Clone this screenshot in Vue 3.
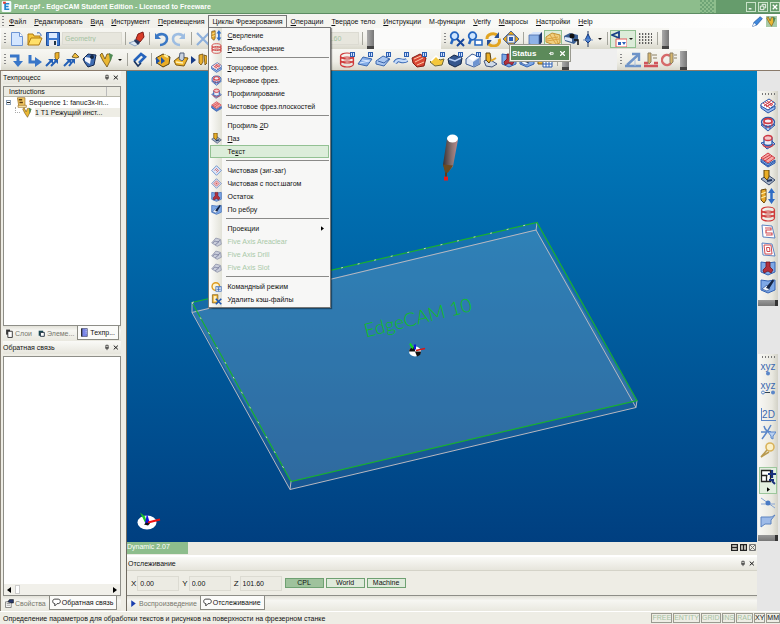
<script setup>
import { ref } from 'vue'

const tag = '<rect x="11" y="0" width="5" height="5" fill="#2c5fb0"/><path d="M12.500 1v3M14.500 1v3" stroke="#cfe0ff"/>'
const drillBit = '<path d="M1 2l5-1v11l-2 3-3-3z" fill="#e8a82a" stroke="#6b4a10"/><path d="M1 6l5-2M1 10l5-2" stroke="#fff2b0"/>'
const rings = '<g fill="none" stroke="#cf3a3a" stroke-width="1.200"><ellipse cx="8" cy="4" rx="6.500" ry="3"/><ellipse cx="8" cy="8" rx="6.500" ry="3"/><ellipse cx="8" cy="12" rx="6.500" ry="3"/><path d="M1.500 4v8M14.500 4v8"/></g>'
const bluePanel = '<path d="M1 2l7 1 7-1v10l-7 3-7-3z" fill="#7ea8e6" stroke="#3464b4"/>'
const magnifier = '<circle cx="5.500" cy="5" r="3.800" fill="#cfe6ff" stroke="#2466c0" stroke-width="1.800"/><path d="M4 8l-2 5" stroke="#2466c0" stroke-width="2.500"/>'

const icons = {
  logo: '<rect x="1" y="0" width="14" height="16" rx="2" fill="#f3fbff"/><path d="M12 4H6v8h6M6 8h5" fill="none" stroke="#1f86d0" stroke-width="2.500"/><path d="M3 1h4v3H3z" fill="#e03c30"/>',
  fresh: '<path d="M2.500 1.500h8l3 4v9h-11z" fill="#d4e6ff" stroke="#6c94d4"/><path d="M10.500 1.500v4h3" fill="#fff" stroke="#6c94d4"/>',
  open: '<path d="M1 14V3h5l1 2h6v3" fill="#f6c63c" stroke="#b07a10"/><path d="M1 14l3-7h11l-3 7z" fill="#ffe06a" stroke="#b07a10"/><path d="M10 2c3-1 4 1 4 3" fill="none" stroke="#2a5cb0"/>',
  save: '<path d="M1.500 1.500h13v13h-13z" fill="#3f7ad0" stroke="#1d4a98"/><path d="M4 2h8v5H4z" fill="#dceaff"/><path d="M4 9h8v6H4z" fill="#e9e9ee"/><path d="M9 10h2v4H9z" fill="#234"/>',
  brush: '<path d="M0 12l8-3 3 3-5 3z" fill="#dfeaf6" stroke="#8aa2c0"/><path d="M9 3l5-2 1 5-4 5-4-3z" fill="#d83c28" stroke="#801c18"/><path d="M6 8l5 3-2 3-4-4z" fill="#26365e"/>',
  undo: '<path d="M2 2v6h6z" fill="#3b78c4"/><path d="M3 6c4-5 11-3 11 2 0 4-4 6-7 6" fill="none" stroke="#3b78c4" stroke-width="2.600"/>',
  redo: '<path d="M14 2v6H8z" fill="#9dbde2"/><path d="M13 6C9 1 2 3 2 8c0 4 4 6 7 6" fill="none" stroke="#9dbde2" stroke-width="2.600"/>',
  cross: '<path d="M2 2l12 12M14 2L2 14" stroke="#8eb0dc" stroke-width="2.200"/>',
  zoomx: magnifier + '<path d="M8 8l7 7M15 8l-7 7" stroke="#17479c" stroke-width="2"/>',
  zoombox: magnifier + '<path d="M8 9h7v5H8z" fill="#fff" stroke="#2466c0" stroke-width="1.500"/>',
  orbit: '<path d="M2 8a6 5 0 0 1 11-3M14 8a6 5 0 0 1-11 4" fill="none" stroke="#e2a420" stroke-width="3"/><path d="M14 1v6H9zM2 15V9h5z" fill="#2a4f94"/><circle cx="8" cy="8" r="2" fill="#eef5ff"/>',
  pan: '<path d="M8 0l4 4H4zM8 16l4-4H4zM0 8l4-4v8zM16 8l-4-4v8z" fill="#e5a51c" stroke="#2f4f92" stroke-width=".8"/><path d="M6 6h4v4H6z" fill="#2a5ab4"/>',
  cube: '<path d="M2 4l4-3h9l-3 3z" fill="#d7e5fb"/><path d="M2 4h10v11L2 13z" fill="#8eb2e6"/><path d="M12 4l3-3v10l-3 4z" fill="#1e3768"/><path d="M2 4h10v11L2 13z" fill="none" stroke="#4b6ca8" stroke-width=".8"/>',
  wire: '<path d="M1 6l6-4 8 2v8l-6 2-8-3z" fill="#f0cf80" stroke="#c39030"/><path d="M2 8l11-2M2 10l12-2M5 4l6 9M9 3l4 9" stroke="#d9a240" fill="none"/>',
  camera: '<path d="M1 5l6-3 8 2v5l-4 4-9-3z" fill="#3b5f92"/><path d="M2 6l7 1v4l-7-2z" fill="#dce9fa"/><circle cx="9" cy="5" r="2.500" fill="#111"/><path d="M11 9h4v5" fill="none" stroke="#111" stroke-width="1.500"/>',
  needle: '<path d="M8 0v16" stroke="#23395f"/><path d="M8 3l3 6-3 3-3-3z" fill="#3f7ad0" stroke="#1d3f80"/><path d="M3 9h10" stroke="#7996c4"/>',
  select: '<path d="M1 4l7-3v6z" fill="none" stroke="#173f86" stroke-width="1.800"/><path d="M5 8h11v8H5z" fill="#fff" stroke="#df5a5a"/><path d="M7 11h3v3H7zM11 11h4l-2 3z" fill="#2a62bc"/>',
  dots: '<path d="M2 3h13M2 6h13M2 9h13M2 12h13" stroke="#333" stroke-width="1.300" stroke-dasharray="1.300 1.700"/>',
  turn: '<path d="M1 4h8v7" fill="none" stroke="#3876c8" stroke-width="3"/><path d="M4 9h10l-5 6z" fill="#3876c8"/>',
  step: '<path d="M3 3v7h6" fill="none" stroke="#3876c8" stroke-width="3"/><path d="M8 5l7 5-7 5z" fill="#3876c8"/>',
  moveA: '<path d="M1 14l5-5M6 14l5-5" stroke="#2460b6" stroke-width="2"/><path d="M3 7h5v5zM8 7h5v5z" fill="#2460b6"/><path d="M10 1l4-1v6l-2 2-2-2z" fill="#eab02c" stroke="#6b4a10" stroke-width=".7"/>',
  moveB: '<path d="M1 14l5-5M6 14l4-5" stroke="#2460b6" stroke-width="2"/><path d="M3 7h5v5zM7 7h5v5z" fill="#2460b6"/><path d="M9 5l3-4 4 4-3 1z" fill="#f3bf3c" stroke="#53421a" stroke-width=".8"/>',
  mill: '<path d="M2 7l5-5 8 1-2 10-6 2-3-4z" fill="#3f6db2" stroke="#14284e"/><path d="M4 5l6 1-1 6-5-3z" fill="#f2f6ff"/><circle cx="11" cy="5" r="2" fill="#132440"/>',
  tool: '<path d="M3 1l3 6 2-5h3l1 5-4 8-4-6-3-6z" fill="#eab733" stroke="#6b4c12" stroke-width=".8"/><path d="M10 1l4 2-3 7" fill="#4f8a54"/>',
  clip: '<path d="M3 9l7-7 4 3-6 6" fill="none" stroke="#2664bc" stroke-width="2.600"/><path d="M3 9l4 5 3-3" fill="none" stroke="#18335f" stroke-width="1.600"/>',
  holder: '<path d="M1 6l7-4 7 3-1 7-6 3-6-4z" fill="#eaae26" stroke="#54400f"/><path d="M1 5v7l4-3zM6 5v7l4-3z" fill="#1e53a8"/><path d="M9 3l4 2" stroke="#fff0a0" stroke-width="2"/>',
  plate: '<path d="M1 9l5-4 9 1-4 8-8-1z" fill="#efb52c" stroke="#7a5814"/><path d="M7 1h4v6l-2 2-3-2z" fill="#c9d2de" stroke="#52617a"/><path d="M3 10l7 1" stroke="#fff3b8" stroke-width="1.500"/>',
  playDrill: '<path d="M0 4l5 4-5 4z" fill="#173c86"/><path d="M8 3l4-1v8l-2 3-2-2zM13 3l3 1v7l-2 2z" fill="#eab02c" stroke="#6b4a10" stroke-width=".8"/>',
  spiral: rings,
  spiralTag: rings + tag,
  sheet: '<path d="M1 12l5-7 9 2-5 7z" fill="#86aee8" stroke="#3d68ae"/><path d="M3 11l9-2M5 8l8 1" stroke="#d9e8ff"/>' + tag,
  sheetB: '<path d="M1 9l7-5 7 3-6 7-8-2z" fill="#a9c6f0" stroke="#3d68ae"/><path d="M3 9l6 2 5-4" fill="none" stroke="#3a64aa"/>' + tag,
  pipe: '<path d="M2 11c4-7 6 1 12-3" fill="none" stroke="#3868b4" stroke-width="4.500"/><path d="M2 11c4-7 6 1 12-3" fill="none" stroke="#c4dbfa" stroke-width="2.500"/>' + tag,
  redShape: '<path d="M1 6l8-4 6 4-2 8-7 1-4-4z" fill="#d84834" stroke="#821d16"/><path d="M3 7l7-3M4 10l8-4M6 13l7-3" stroke="#ffc7aa"/>' + tag,
  yellowShape: '<path d="M1 10l6-6 4 4 4-1-2 6-7 1z" fill="#f4c73c" stroke="#6f6a3a"/><path d="M2 9l5-5 3 3" fill="none" stroke="#fff" stroke-width="1.500"/>' + tag,
  sphere: '<path d="M1 7l6-4 8 3-1 6-6 3-6-3z" fill="#35578e" stroke="#142748"/><path d="M2 7l6 2 6-3" stroke="#b9d2f8" fill="none" stroke-width="1.500"/>' + tag,
  block: '<path d="M1 7l6-5 8 3v7l-6 3-8-3z" fill="#dfe8f4" stroke="#3e5f98"/><path d="M3 6l5-3 5 2-5 4z" fill="#fff"/><path d="M8 10l6-4v6l-6 3z" fill="#6d94d0"/>' + tag,
  handTool: '<path d="M1 9l5-2 8 5-5 3-6-1z" fill="#cfdae8" stroke="#44567c"/><path d="M3 1h4l1 7-2 3-3-3z" fill="#eaae26" stroke="#5d420f"/><path d="M8 9l5-3" stroke="#e9ad2a" stroke-width="2"/>',
  rest: bluePanel + '<path d="M6 2h4v5l3 3-2 3-3-2-4 2-1-3 3-3z" fill="#b3303c" stroke="#6f1420" stroke-width=".8"/>',
  rib: bluePanel + '<path d="M2 11l5-4 3 4-3 2z" fill="#f3f8ff" stroke="#294f94" stroke-width=".7"/><path d="M13 1l-5 6-2 3 3 1 5-8z" fill="#152544"/>',
  face: '<path d="M1 7l7 5 7-4v3l-7 4-7-5z" fill="#9bbcf0" stroke="#2b58aa"/><path d="M1 6l8-5 6 4v2l-7 5-7-4z" fill="#fff" stroke="#2b58aa"/><path d="M3 5l7 5M5 4l7 4M7 3l6 4M4 8l8-6M6 9l8-5" stroke="#cf3a44"/>',
  rough: '<path d="M1 9l7 6 7-6-7-4z" fill="#a9c5f1" stroke="#2b58aa"/><ellipse cx="8" cy="6" rx="6.500" ry="4.500" fill="#f5eef4" stroke="#2b58aa" stroke-width="1.400"/><ellipse cx="8" cy="5" rx="4" ry="2.400" fill="none" stroke="#cf3a44" stroke-width="1.600"/><path d="M4 5v4c1 3 7 3 8 0V5" fill="none" stroke="#cf3a44"/><path d="M6 9v4M10 9v4" stroke="#2b58aa"/>',
  profile: '<path d="M1 9l6 6 8-5-4-4z" fill="#a9c5f1" stroke="#2b58aa"/><path d="M3 10c0 4 10 4 10 0" fill="none" stroke="#cf3a44" stroke-width="1.300"/><path d="M4 4v6c1 2 7 2 8 0V4z" fill="#e6eaf6" stroke="#2b58aa" stroke-width="1.300"/><ellipse cx="8" cy="4" rx="4" ry="2.500" fill="#f2c6c8" stroke="#cf3a44" stroke-width="1.300"/>',
  flat: '<path d="M1 7l7 5 7-4v3l-7 4-7-5z" fill="#86abe6" stroke="#2b58aa"/><path d="M1 6l7-5 7 5-7 5z" fill="#f6a8a4" stroke="#cf3a44"/><path d="M3 7l7-4M5 9l7-5" stroke="#cf3a44"/><path d="M1 9l7 5 7-5" fill="none" stroke="#2b58aa"/>',
  slot: '<path d="M1 9l7-4 7 5-6 5z" fill="#a8b6ca" stroke="#3b4b6c"/><path d="M4 0h5v7l-2 3-3-3z" fill="#eaae26" stroke="#5d420f"/><path d="M7 11l5-1" stroke="#24375e" stroke-width="2"/>',
  drill: drillBit + '<path d="M11.500 3v10" stroke="#2f6cc4" stroke-width="2.500"/><path d="M8 5l3.500-5L15 5zM8 11l3.500 5 3.500-5z" fill="#2f6cc4"/>',
  diamond: '<path d="M8 1l7 7-7 7-7-7z" fill="#dce8fb" stroke="#4472bc"/><path d="M5 8l3-3 3 3-3 3M7 8h2" fill="none" stroke="#cf5a60" stroke-width="1.200"/>',
  diamondRed: '<path d="M8 1l7 7-7 7-7-7z" fill="#dde4f4" stroke="#5a78b4"/><path d="M8 4l4 4-4 4-4-4z" fill="#f1c3c3" stroke="#cf5a60"/><path d="M8 6.500l1.500 1.500L8 9.500 6.500 8z" fill="#cf5a60"/>',
  zigzag: '<path d="M2 1l10 1 3 12-12-1z" fill="#fff" stroke="#5d82c0"/><path d="M5 4h6v2H6v3h6v2H6" fill="none" stroke="#d04a50" stroke-width="1.200"/>',
  spiralSq: '<path d="M2 1l10 1 3 12-12-1z" fill="#fff" stroke="#5d82c0"/><path d="M4 3h7l1 9H5zM6.500 5.500h3l.5 4h-3z" fill="none" stroke="#d04a50"/>',
  gray: '<path d="M1 10l6-7 7 2 1 7-6 3z" fill="#c9cdda" stroke="#8288a0"/><path d="M3 10c3-6 6 2 10-4M6 13l6-5" fill="none" stroke="#747a9a" stroke-width="1.200"/>',
  cmd: '<circle cx="7" cy="8" r="5.500" fill="#fff4cf" stroke="#dc9a1e" stroke-width="2"/><path d="M7 8h8v7H7z" fill="#fff" stroke="#2a5eb4"/><path d="M8 10h6M8 12.500h6M11 9v6" stroke="#2a5eb4"/>',
  wipe: '<path d="M2 1h8v12H2z" fill="#f0b02c" stroke="#7c5c18"/><path d="M4 3h4v8H4z" fill="#fff0c0"/><path d="M7 7l8 8M15 7l-8 8" stroke="#1d56b2" stroke-width="2.300"/>',
  measure: '<path d="M2 13L13 3M0 14h16" stroke="#6f94c8" stroke-width="2.400"/><path d="M7 2h7v7" fill="none" stroke="#6f94c8" stroke-width="2.400"/><path d="M10 8v6" stroke="#a8bfdf"/>',
  cutA: '<path d="M1 14h14M1 11h4M11 11h4" stroke="#d0545a" stroke-width="2.500"/><path d="M5 1h3v9l-2 2-1-2zM9 3h5M10 6h4" fill="#d8b66a" stroke="#8c8064"/>',
  cutB: '<path d="M9 4a5 5 0 1 0 1 7" fill="none" stroke="#d66a6a" stroke-width="2.500"/><path d="M9 1h3v9l-2 2-1-2zM13 3h3M13 6h3" fill="#d8b66a" stroke="#8c8064"/>',
  gold: '<path d="M1 4h8v8H1z" fill="#f0b836" stroke="#76591a"/><path d="M6 6h9v9H6z" fill="#fff" stroke="#2a5eb4"/><path d="M6 9h9M6 12h9M9 6v9M12 6v9" stroke="#2a5eb4"/>',
  curve: '<path d="M1 8h6L11 1M7 8L2 15M4 2c1 4 4 6 7 6" fill="none" stroke="#5a86c8" stroke-width="1.500"/><path d="M8 8h8l-3 4v3l-2-1v-2z" fill="#b8d0f2" stroke="#5a86c8"/>',
  lens: '<circle cx="10" cy="5" r="4" fill="#fbf0c8" stroke="#d9b35c" stroke-width="1.600"/><path d="M7 8l-6 7 8-5" fill="none" stroke="#b8994e" stroke-width="1.500"/>',
  line: '<path d="M1 3l14 10M1 9h14" stroke="#85a3d2"/><circle cx="8" cy="8" r="2.500" fill="#4a7ac4"/>',
  flag: '<path d="M1 4h9c2 0 3-1 5-2l-4 5v4H5l-4 3z" fill="#9ebbe8" stroke="#5a82c0"/>',
  pen: '<path d="M1 15l2-6 9-8 3 3-8 9z" fill="#3f88dc" stroke="#174a94"/><path d="M1 15l2-5 3 3z" fill="#fff"/>',
  layers: '<path d="M2 1h7v9H2z" fill="#333"/><path d="M5 4h8v11H5z" fill="#fff" stroke="#222" stroke-width="1.500"/>',
  feature: '<path d="M3 3h8v9H3z" fill="#1a4a54"/><path d="M6 6h7v7H6z" fill="#fff" stroke="#123" stroke-width="1.500"/>',
  book: '<path d="M3 1h10v14H3z" fill="#7a86e8" stroke="#2d3150"/><path d="M3 1v14" stroke="#222" stroke-width="2"/><path d="M10 3h2M10 6h2M10 9h2" stroke="#fff"/>',
  props: '<path d="M1 5h10v10H1z" fill="#fff" stroke="#333"/><path d="M3 8h6M3 11h6" stroke="#555"/><path d="M5 5l3-4h7v6h-4z" fill="#28396e" stroke="#111"/>',
  bubble: '<path d="M5 2h6c5 0 5 8 0 8H9l-4 4v-4C0 10 0 2 5 2z" fill="#fff" stroke="#222" stroke-width="1.500"/>',
  play: '<path d="M4 2l8 6-8 6z" fill="#1a3fae"/>',
  seq: '<path d="M2 1h11v12H4z" fill="#f2c964" stroke="#9d6d1c"/><path d="M4 4h5M5 8h5" stroke="#5e3d10" stroke-width="2"/><path d="M3 12h12v3H3z" fill="#fff1bd" stroke="#9d6d1c"/>',
  pin: '<path d="M5 2h6v7H5zM3 9.500h10M8 10v5" fill="none" stroke="#222" stroke-width="2"/>',
  close: '<path d="M2 3l11 10M13 3L2 13" stroke="#111" stroke-width="2.600"/>',
}

const menus = [
  ['Ф', 'айл'], ['Р', 'едактировать'], ['В', 'ид'], ['И', 'нструмент'], ['П', 'еремещения'],
  ['', 'Циклы Фрезерования'], ['О', 'перации'], ['Т', 'вердое тело'], ['И', 'нструкции'],
  ['', 'М-функции'], ['V', 'erify'], ['М', 'акросы'], ['Н', 'астройки'], ['H', 'elp'],
]
const openMenu = 5

// Each entry: text before the access key, the key itself, text after it.
const cycles = [
  [{ i: 'drill', t: ['', 'С', 'верление'] }, { i: 'spiral', t: ['', 'Р', 'езьбонарезание'] }],
  [{ i: 'face', t: ['', 'Т', 'орцовое фрез.'] }, { i: 'rough', t: ['Черновое фрез.', '', ''] }, { i: 'profile', t: ['Профилирование', '', ''] }, { i: 'flat', t: ['Чистовое фрез.плоскостей', '', ''] }],
  [{ t: ['Профиль ', '2', 'D'] }, { i: 'slot', t: ['', 'П', 'аз'] }, { t: ['Те', 'к', 'ст'], hot: true }],
  [{ i: 'diamond', t: ['Чистовая (зиг-заг)', '', ''] }, { i: 'diamondRed', t: ['Чистовая с пост.шагом', '', ''] }, { i: 'rest', t: ['Остаток', '', ''] }, { i: 'rib', t: ['По ребру', '', ''] }],
  [{ t: ['Проекции', '', ''], sub: true }, { i: 'gray', t: ['Five Axis Areaclear', '', ''], off: true }, { i: 'gray', t: ['Five Axis Drill', '', ''], off: true }, { i: 'gray', t: ['Five Axis Slot', '', ''], off: true }],
  [{ i: 'cmd', t: ['Командный режим', '', ''] }, { i: 'wipe', t: ['Удалить кэш-файлы', '', ''] }],
]

const stepTools = ['turn', 'step', 'moveA', 'moveB', 'mill', 'tool']
const cycleTools = ['spiralTag', 'sheet', 'sheetB', 'pipe', 'redShape', 'yellowShape', 'sphere', 'block', 'handTool', 'rest', 'rib', 'gold']
const sideTools = ['face', 'rough', 'profile', 'flat', 'slot', 'drill', 'spiral', 'zigzag', 'spiralSq', 'rest', 'rib']

const coords = ref([
  { axis: 'X', value: '0.00' },
  { axis: 'Y', value: '0.00' },
  { axis: 'Z', value: '101.60' },
])
const space = ref('CPL')
const modes = ['FREE', 'ENTITY', 'GRID', 'INS', 'RAD', 'XY', 'MM']
</script>

<template>
  <div class="app">
    <header class="title">
      <svg class="ic mid" viewBox="0 0 16 16" v-html="icons.logo"></svg>
      <h1>Part.epf - EdgeCAM Student Edition - Licensed to Freeware</h1>
      <span class="pixels"></span>
      <div class="winbtns">
        <button aria-label="Minimize"><svg viewBox="0 0 9 9"><path d="M2 6.500h3" stroke="#fff" stroke-width="1.500" /></svg></button>
        <button aria-label="Restore"><svg viewBox="0 0 9 9"><path d="M3.500 3V1.500h4v4H6M1.500 3.500h4v4h-4z" fill="none" stroke="#fff" /></svg></button>
        <button aria-label="Close"><svg viewBox="0 0 9 9"><path d="M2 2l5 5M7 2L2 7" stroke="#fff" stroke-width="1.500" /></svg></button>
      </div>
    </header>

    <nav class="menubar">
      <span class="grip"></span>
      <div v-for="(m, n) in menus" :key="n" class="menu" :class="{ open: n === openMenu }">
        <button class="menuhead"><u>{{ m[0] }}</u>{{ m[1] }}</button>
        <div v-if="n === openMenu" class="dropdown">
          <div v-for="(group, g) in cycles" :key="g" class="group">
            <button v-for="(c, k) in group" :key="k" class="entry" :class="{ hot: c.hot }" :disabled="c.off">
              <span class="slot"><svg v-if="c.i" class="ic mid" viewBox="0 0 16 16" v-html="icons[c.i]"></svg></span>
              <span class="label">{{ c.t[0] }}<u>{{ c.t[1] }}</u>{{ c.t[2] }}</span>
              <svg v-if="c.sub" class="more" viewBox="0 0 4 6"><path d="M0 0l4 3-4 3z" /></svg>
            </button>
          </div>
        </div>
      </div>
      <div class="modeswitch">
        <svg class="ic mid" viewBox="0 0 16 16" v-html="icons.pen"></svg>
        <span class="on"><svg class="ic mid" viewBox="0 0 16 16" v-html="icons.tool"></svg></span>
      </div>
    </nav>

    <div class="bars">
      <div class="row">
        <div class="bar file">
          <span class="grip"></span>
          <button v-for="i in ['fresh', 'open', 'save']" :key="i" class="tb" :aria-label="i"><svg class="ic" viewBox="0 0 16 16" v-html="icons[i]"></svg></button>
          <input class="field geo" aria-label="Layer" value="Geometry" disabled />
          <i class="sep"></i>
          <button class="tb" aria-label="brush"><svg class="ic" viewBox="0 0 16 16" v-html="icons.brush"></svg></button>
          <i class="sep"></i>
          <button v-for="i in ['undo', 'redo']" :key="i" class="tb" :aria-label="i"><svg class="ic" viewBox="0 0 16 16" v-html="icons[i]"></svg></button>
          <i class="sep"></i>
          <button class="tb" aria-label="delete"><svg class="ic" viewBox="0 0 16 16" v-html="icons.cross"></svg></button>
          <span class="fill"></span>
          <input class="field depth" aria-label="Depth" value="101.60" disabled />
          <i class="sep"></i>
          <i class="over"></i>
        </div>
        <span class="void"></span>
        <div class="bar">
          <span class="grip"></span>
          <button v-for="i in ['zoomx', 'zoombox', 'orbit', 'pan']" :key="i" class="tb" :aria-label="i"><svg class="ic" viewBox="0 0 16 16" v-html="icons[i]"></svg></button>
          <i class="sep"></i>
          <button class="tb" aria-label="shaded"><svg class="ic" viewBox="0 0 16 16" v-html="icons.cube"></svg></button>
          <button class="tb on" aria-label="wireframe"><svg class="ic" viewBox="0 0 16 16" v-html="icons.wire"></svg></button>
          <button class="tb" aria-label="view"><svg class="ic" viewBox="0 0 16 16" v-html="icons.camera"></svg></button>
          <button class="tb" aria-label="needle"><svg class="ic" viewBox="0 0 16 16" v-html="icons.needle"></svg><b class="caret"></b></button>
          <i class="sep"></i>
          <button class="tb on" aria-label="select"><svg class="ic" viewBox="0 0 16 16" v-html="icons.select"></svg><b class="caret"></b></button>
          <button class="tb" aria-label="grid"><svg class="ic" viewBox="0 0 16 16" v-html="icons.dots"></svg></button>
          <i class="sep"></i>
          <i class="over"></i>
        </div>
      </div>
      <div class="row">
        <div class="bar cyc">
          <span class="grip"></span>
          <button v-for="i in stepTools" :key="i" class="tb" :aria-label="i"><svg class="ic" viewBox="0 0 16 16" v-html="icons[i]"></svg></button>
          <b class="caret"></b>
          <i class="sep"></i>
          <button class="tb" aria-label="clip"><svg class="ic" viewBox="0 0 16 16" v-html="icons.clip"></svg></button>
          <i class="sep"></i>
          <button v-for="i in ['holder', 'plate', 'playDrill']" :key="i" class="tb" :aria-label="i"><svg class="ic" viewBox="0 0 16 16" v-html="icons[i]"></svg></button>
          <span class="fill"></span>
          <button v-for="i in cycleTools" :key="i" class="tb" :aria-label="i"><svg class="ic" viewBox="0 0 16 16" v-html="icons[i]"></svg></button>
          <i class="sep"></i>
          <i class="over"></i>
          <div class="status">
            <strong>Status</strong>
            <svg viewBox="0 0 6 6"><path d="M0 3h2M2 1v4M2 2h3v2H2" fill="none" stroke="#fff" /></svg>
            <svg viewBox="0 0 6 6"><path d="M0 0l6 6M6 0L0 6" stroke="#fff" stroke-width="1.500" /></svg>
          </div>
        </div>
        <span class="void grey"></span>
        <div class="bar">
          <span class="grip"></span>
          <button v-for="i in ['measure', 'cutA', 'cutB']" :key="i" class="tb" :aria-label="i"><svg class="ic" viewBox="0 0 16 16" v-html="icons[i]"></svg></button>
          <i class="over"></i>
        </div>
      </div>
    </div>

    <main class="work">
      <aside class="left">
        <section class="panel">
          <h2>Техпроцесс<span><svg class="ic tiny" viewBox="0 0 16 16" v-html="icons.pin"></svg><svg class="ic tiny" viewBox="0 0 16 16" v-html="icons.close"></svg></span></h2>
          <div class="box">
            <div class="th"><span>Instructions</span><span></span></div>
            <ul class="tree">
              <li><i class="minus"></i><svg class="ic mid" viewBox="0 0 16 16" v-html="icons.seq"></svg><span>Sequence 1: fanuc3x-in...</span></li>
              <li class="child"><i class="branch"></i><svg class="ic mid" viewBox="0 0 16 16" v-html="icons.tool"></svg><span class="picked">1 T1 Режущий инст...</span></li>
            </ul>
          </div>
          <div class="tabs">
            <button><svg class="ic small" viewBox="0 0 16 16" v-html="icons.layers"></svg>Слои</button>
            <button><svg class="ic small" viewBox="0 0 16 16" v-html="icons.feature"></svg>Элеме...</button>
            <button class="cur"><svg class="ic small" viewBox="0 0 16 16" v-html="icons.book"></svg>Техпр...</button>
          </div>
        </section>
        <section class="panel">
          <h2>Обратная связь<span><svg class="ic tiny" viewBox="0 0 16 16" v-html="icons.pin"></svg><svg class="ic tiny" viewBox="0 0 16 16" v-html="icons.close"></svg></span></h2>
          <div class="box">
            <div class="scroll"><svg viewBox="0 0 4 6"><path d="M4 0L0 3l4 3z" /></svg><i></i><svg viewBox="0 0 4 6"><path d="M0 0l4 3-4 3z" /></svg></div>
          </div>
          <div class="tabs">
            <button><svg class="ic small" viewBox="0 0 16 16" v-html="icons.props"></svg>Свойства</button>
            <button class="cur"><svg class="ic small" viewBox="0 0 16 16" v-html="icons.bubble"></svg>Обратная связь</button>
          </div>
        </section>
      </aside>

      <div class="center">
        <svg class="scene" viewBox="127 70 630 472" preserveAspectRatio="xMidYMid slice">
          <defs>
            <linearGradient id="sky" x1="0" y1="0" x2="0" y2="1">
              <stop offset="0" stop-color="#0080c2" />
              <stop offset="1" stop-color="#003f80" />
            </linearGradient>
            <linearGradient id="shank" x1="0" y1="0" x2="1" y2="0">
              <stop offset="0" stop-color="#3a3234" />
              <stop offset=".6" stop-color="#8a7474" />
              <stop offset="1" stop-color="#c08c8c" />
            </linearGradient>
          </defs>
          <rect x="127" y="70" width="630" height="472" fill="url(#sky)" />
          <path d="M192 302L537 222 637 400 636 407 290 489 192 312z" fill="#8fa8c8" fill-opacity=".16" />
          <path d="M192 311L536 229 637 400 291 481z" fill="#8fb8d8" fill-opacity=".2" />
          <path d="M192 312L536 229.500 636 407 290 489zM192 302v10M537 222l-1 8M637 400l-1 7M291 481l-1 8" fill="none" stroke="#b8b8c0" />
          <path d="M192 302L537 222 637 400 291 481z" fill="none" stroke="#18b030" stroke-width="1.200" />
          <path d="M192 302L537 222M192 302l99 179" fill="none" stroke="#c4ccc8" stroke-dasharray="2 15" />
          <text x="366" y="337" class="engraved" transform="rotate(-14 366 337)">EdgeCAM 10</text>
          <path d="M447 138l-4 26 3 9h1l6-7 5-27z" fill="url(#shank)" />
          <path d="M443 164l2 8h3l5-7z" fill="#6b4a20" />
          <ellipse cx="452.500" cy="138" rx="5.500" ry="4" fill="#fff" />
          <rect x="444" y="176" width="4" height="4" fill="#f01818" />
          <path d="M446 172v4" stroke="#5c3d1c" stroke-width="2" />
          <ellipse cx="415" cy="351" rx="6" ry="5" fill="#fff" />
          <path d="M409 351a6 5 0 0 1 6-5v5zM415 351h6a6 5 0 0 1-4 5z" fill="#111" />
          <path d="M413 348l-3-5" stroke="#10d820" stroke-width="2" />
          <path d="M415 349v-5" stroke="#1018d8" stroke-width="2" />
          <path d="M416 350l9-2" stroke="#d81818" stroke-width="1.500" />
          <ellipse cx="147" cy="522" rx="9.500" ry="7" fill="#fff" />
          <path d="M145 522l-5-10 5 4 2 6z" fill="#18c828" />
          <path d="M145 523l2-10 3 10z" fill="#1414e0" />
          <path d="M148 522l12-3" stroke="#f01010" stroke-width="2" />
          <path d="M144 524l4 1 2-2-4-1z" fill="#111" />
        </svg>
        <div class="viewstat">
          <span class="dyn">Dynamic 2.07</span>
          <div class="mini">
            <svg viewBox="0 0 7 7"><path d="M.500.500h6v6h-6zM0 3.500h7" fill="none" stroke="#222" stroke-width="1.500" /></svg>
            <svg viewBox="0 0 7 7"><path d="M.500.500h6v6h-6zM3.500 0v7" fill="none" stroke="#222" stroke-width="1.500" /></svg>
            <svg viewBox="0 0 7 7"><path d="M.500.500h6v6h-6zM1 1l5 5M6 1L1 6" fill="none" stroke="#777" /></svg>
          </div>
        </div>
        <section class="track">
          <h2>Отслеживание<span><svg class="ic tiny" viewBox="0 0 16 16" v-html="icons.pin"></svg><svg class="ic tiny" viewBox="0 0 16 16" v-html="icons.close"></svg></span></h2>
          <div class="readout">
            <label v-for="c in coords" :key="c.axis">{{ c.axis }}<input v-model="c.value" class="field pos" /></label>
            <div class="spaces">
              <button v-for="s in ['CPL', 'World', 'Machine']" :key="s" :class="{ cur: s === space }" @click="space = s">{{ s }}</button>
            </div>
          </div>
          <div class="tabs">
            <button><svg class="ic small" viewBox="0 0 16 16" v-html="icons.play"></svg>Воспроизведение</button>
            <button class="cur"><svg class="ic small" viewBox="0 0 16 16" v-html="icons.bubble"></svg>Отслеживание</button>
          </div>
        </section>
      </div>

      <aside class="right">
        <div class="vbar">
          <span class="hgrip"></span>
          <button v-for="i in sideTools" :key="i" class="sb" :aria-label="i"><svg class="ic" viewBox="0 0 16 16" v-html="icons[i]"></svg></button>
          <i class="vover"></i>
        </div>
        <div class="vbar">
          <span class="hgrip"></span>
          <button class="sb xyz">xyz<svg viewBox="0 0 16 5"><circle cx="8" cy="2.500" r="2" fill="#5a86c8" /></svg></button>
          <button class="sb xyz">xyz<svg viewBox="0 0 16 5"><circle cx="3" cy="2.500" r="1.500" fill="none" stroke="#5a86c8" /><path d="M5 2.500h5" stroke="#345" /><circle cx="13" cy="2.500" r="2" fill="#5a86c8" /></svg></button>
          <button class="sb two">2D</button>
          <button class="sb" aria-label="curve"><svg class="ic" viewBox="0 0 16 16" v-html="icons.curve"></svg></button>
          <button class="sb" aria-label="lens"><svg class="ic" viewBox="0 0 16 16" v-html="icons.lens"></svg></button>
          <button class="sb snap" aria-label="snap">
            <svg class="ic" viewBox="0 0 16 16"><path d="M1.500 1.500h9v11h-9zM1.500 6.500h6M6.500 6.500v6" fill="#fff" stroke="#222" stroke-width="1.300" /><path d="M8 5h8M12 1v8M9 11h5" stroke="#18307c" stroke-width="2.200" /><path d="M12 12l3 3" stroke="#18307c" stroke-width="2" /></svg>
            <svg class="more" viewBox="0 0 4 6"><path d="M0 0l4 3-4 3z" /></svg>
          </button>
          <button class="sb" aria-label="line"><svg class="ic" viewBox="0 0 16 16" v-html="icons.line"></svg></button>
          <button class="sb" aria-label="flag"><svg class="ic" viewBox="0 0 16 16" v-html="icons.flag"></svg></button>
          <i class="vover"></i>
        </div>
      </aside>
    </main>

    <footer class="statusbar">
      <p>Определение параметров для обработки текстов и рисунков на поверхности на фрезерном станке</p>
      <span v-for="(m, n) in modes" :key="m" :class="{ lit: n > 4 }">{{ m }}</span>
    </footer>
  </div>
</template>

<style>
body { margin: 0; }
</style>

<style scoped>
* { box-sizing: border-box; }
.app { display: flex; flex-direction: column; min-height: 100vh; background: #eeede5; color: #111; font: 7px/9px "Liberation Sans", sans-serif; }
button, input { font: inherit; color: inherit; margin: 0; padding: 0; border: 0; background: none; border-radius: 0; }
svg { display: block; flex: none; }
.ic { width: 16px; height: 16px; }
.mid { width: 11px; height: 11px; }
.small { width: 9px; height: 9px; }
.tiny { width: 6px; height: 7px; }

.title { display: flex; align-items: center; gap: 2px; height: 14px; padding-left: 1px; background: #8dbd8c; border-bottom: 1px solid #5c8c62; }
.title h1 { flex: 1; margin: 0; font-size: 7px; color: #fff; white-space: nowrap; }
.pixels { width: 14px; height: 100%; background: repeating-conic-gradient(#8dbd8c 0 25%, #6ea476 0 50%) 0 0 / 4px 4px; }
.winbtns { display: flex; gap: 2px; align-self: stretch; align-items: center; padding-left: 30px; background: #669c6c; }
.winbtns button { width: 10px; height: 10px; border: 1px solid #c9e2c8; }
.winbtns svg { width: 8px; height: 8px; }

.grip { flex: none; width: 2px; height: 12px; margin: 0 2px; background: repeating-linear-gradient(#888 0 1px, transparent 1px 3px); }
.menubar { position: relative; z-index: 5; display: flex; align-items: center; height: 14px; background: linear-gradient(90deg, #efeee8, #f8f8f5 60%, #fff); }
.menubar .grip { height: 10px; margin-right: 1px; }
.menu { position: relative; }
.menuhead { display: block; height: 13px; padding: 0 3px; border: 1px solid transparent; line-height: 11px; white-space: nowrap; }
.open .menuhead { background: #f4f4f0; border-color: #777 #777 #f4f4f0; }
.dropdown { position: absolute; top: 12px; left: 0; width: 123px; padding: 1px; border: 1px solid #777; background: linear-gradient(90deg, #fdfdfc 0, #e2e2d8 13px, #f7f7f6 13px); box-shadow: 1px 1px 1px #0006; }
.group + .group { margin-top: 2px; padding-top: 3px; border-top: 1px solid #8a8a88; border-image: linear-gradient(90deg, transparent 17px, #8a8a88 17px) 1; }
.entry { display: flex; align-items: center; width: 100%; height: 13px; padding: 0 4px 0 0; border: 1px solid transparent; text-align: left; white-space: nowrap; }
.entry .slot { width: 16px; flex: none; }
.entry .label { flex: 1; }
.entry:disabled { color: #a9c9a8; }
.entry.hot { background: #dcedda; border-color: #93c193; }
.more { width: 3px; height: 5px; }
.modeswitch { display: flex; align-items: center; gap: 3px; margin: 0 3px 0 auto; }
.modeswitch .on { background: #a9cba8; }

.bars { background: #fbfbfa; border-bottom: 1px solid #8a7a6a; padding-left: 1px; }
.row { display: flex; height: 21px; }
.bar { position: relative; display: flex; align-items: center; background: linear-gradient(#f7f7f3, #efeee7 60%, #d9d8cc); padding-left: 1px; }
.file { width: 373px; }
.cyc { width: 568px; }
.fill { flex: 1; }
.void { width: 67px; }
.void.grey { width: 48px; background: #efefef; }
.tb { display: flex; flex: none; align-items: center; justify-content: center; min-width: 18px; height: 18px; }
.tb.on { background: #dcecd9; border: 1px solid #8fbf90; }
.caret { margin: 0 2px; border: 2px solid transparent; border-top-color: #111; border-bottom: 0; }
.sep { flex: none; width: 1px; height: 13px; margin: 0 2px 0 3px; background: #a5a59c; }
.over { flex: none; width: 7px; height: 19px; margin-left: 2px; background: linear-gradient(90deg, #aaa, #777); border-bottom: 3px solid #444; align-self: flex-end; }
.field { border: 1px solid #dcdbd2; background: #ecebe3; height: 13px; padding: 0 2px; min-width: 0; }
.field:disabled { color: #a4c2a2; background: #e7e6dd; }
.geo { width: 60px; }
.depth { width: 44px; padding-left: 4px; }
.status { position: absolute; z-index: 6; right: -1px; top: -4px; width: 60px; height: 16px; display: flex; align-items: center; gap: 6px; padding: 0 4px 0 1px; background: #5c8a5a; border: 1px solid #f1f1ea; outline: 1px solid #9a9a90; color: #fff; }
.status strong { flex: 1; font-size: 8px; }
.status svg { width: 5px; height: 5px; }

.work { flex: 1; display: flex; min-height: 0; }
.left { width: 127px; flex: none; display: flex; flex-direction: column; padding: 0 5px 0 2px; border-left: 1px solid #8b8478; border-right: 1px solid #6f6a60; }
.panel { flex: 1; display: flex; flex-direction: column; }
h2 { display: flex; justify-content: space-between; align-items: center; margin: 0; height: 13px; font-size: 7px; font-weight: 400; background: linear-gradient(#fafaf7, #e6e5dc); }
h2 span { display: flex; gap: 3px; padding-right: 2px; }
.box { flex: 1; display: flex; flex-direction: column; margin-top: 2px; background: #fff; border: 1px solid #8e8e88; }
.th { display: flex; height: 10px; padding-left: 5px; border-bottom: 1px solid #b8b7aa; background: #ecebe2; line-height: 9px; }
.th span:first-child { flex: 1; border-right: 1px solid #bbb; }
.th span:last-child { width: 13px; }
.tree { list-style: none; margin: 0; padding: 0 0 0 2px; }
.tree li { display: flex; align-items: center; gap: 2px; height: 10px; white-space: nowrap; }
.minus { width: 5px; height: 5px; margin-right: 3px; border: 1px solid #8aa0b8; background: linear-gradient(#fff 1px, #222 1px 2px, #fff 2px); }
.tree .child { padding-left: 9px; }
.branch { width: 5px; height: 6px; margin-bottom: 5px; border-left: 1px dotted #aaa; border-bottom: 1px dotted #aaa; }
.picked { background: #eeede5; flex: 1; }
.tabs { display: flex; height: 15px; background: linear-gradient(#e2e1d8, #f6f6f2 30%, #e9e8df); }
.tabs button { display: flex; align-items: center; gap: 1px; padding: 0 3px 0 2px; color: #77776c; white-space: nowrap; height: 14px; }
.tabs .cur { background: #fbfbf9; color: #111; border: 1px solid #8a8a82; border-top: 0; }
.scroll { margin-top: auto; display: flex; align-items: center; height: 11px; padding: 0 3px; background: #f1f0ea; }
.scroll svg { width: 4px; height: 6px; }
.scroll i { width: 5px; height: 9px; margin: 0 auto 0 4px; border: 1px solid #ccc; background: #fff; }

.center { flex: 1; display: flex; flex-direction: column; min-width: 0; }
.scene { flex: 1 1 0; width: 100%; min-height: 0; background: #0060a4; }
.engraved { font: 300 19px Lato, sans-serif; fill: #10c020; }
.viewstat { display: flex; height: 15px; background: #ecebe3; border-bottom: 2px solid #fff; }
.dyn { width: 61px; height: 12px; background: #8dbd8c; color: #fff; line-height: 10px; }
.mini { display: flex; gap: 2px; margin: 2px 1px 0 auto; }
.mini svg { width: 7px; height: 7px; }
.readout { display: flex; align-items: center; gap: 3px; height: 26px; padding-left: 4px; border-top: 1px solid #d4d3c8; border-bottom: 1px solid #8e8e88; }
.readout label { display: flex; align-items: center; gap: 1px; font-size: 8px; }
.pos { width: 42px; height: 15px; font-size: 7px; }
.spaces { display: flex; gap: 2px; }
.spaces button { width: 39px; height: 10px; border: 1px solid #6fa172; background: #dfeadb; line-height: 8px; }
.spaces .cur { background: #9fc29c; }
.track h2 { padding-left: 1px; }

.right { width: 23px; flex: none; display: flex; flex-direction: column; justify-content: space-between; padding: 20px 2px 70px 1px; background: #e6e6e6; }
.vbar { display: flex; flex-direction: column; align-items: center; background: linear-gradient(90deg, #f8f8f5, #e9e8e0 70%, #d2d1c6); }
.hgrip { width: 13px; height: 2px; margin: 2px 0; background: repeating-linear-gradient(90deg, #777 0 1px, transparent 1px 3px); }
.sb { display: flex; flex-direction: column; align-items: center; justify-content: center; width: 18px; height: 18px; }
.vover { align-self: stretch; height: 6px; margin-top: 5px; background: linear-gradient(#999, #777); border-right: 3px solid #333; }
.xyz { font-size: 10px; line-height: 8px; color: #3b68b0; height: 19px; }
.xyz svg { width: 16px; height: 5px; }
.two { font-size: 10px; color: #3b68b0; border-left: 1px solid #5a86c8; border-bottom: 1px solid #5a86c8; width: 15px; height: 13px; margin: 10px 0 2px; }
.snap { height: 27px; margin: 8px 0 0; background: #e2eedf; border: 1px solid #9cc79c; gap: 2px; }

.statusbar { display: flex; align-items: center; gap: 1px; height: 13px; padding-left: 3px; border-top: 1px solid #fff; }
.statusbar p { flex: 1; margin: 0; white-space: nowrap; }
.statusbar span { border: 1px solid #9a9a90; line-height: 8px; color: #a4c2a2; }
.statusbar .lit { color: #111; }
</style>
